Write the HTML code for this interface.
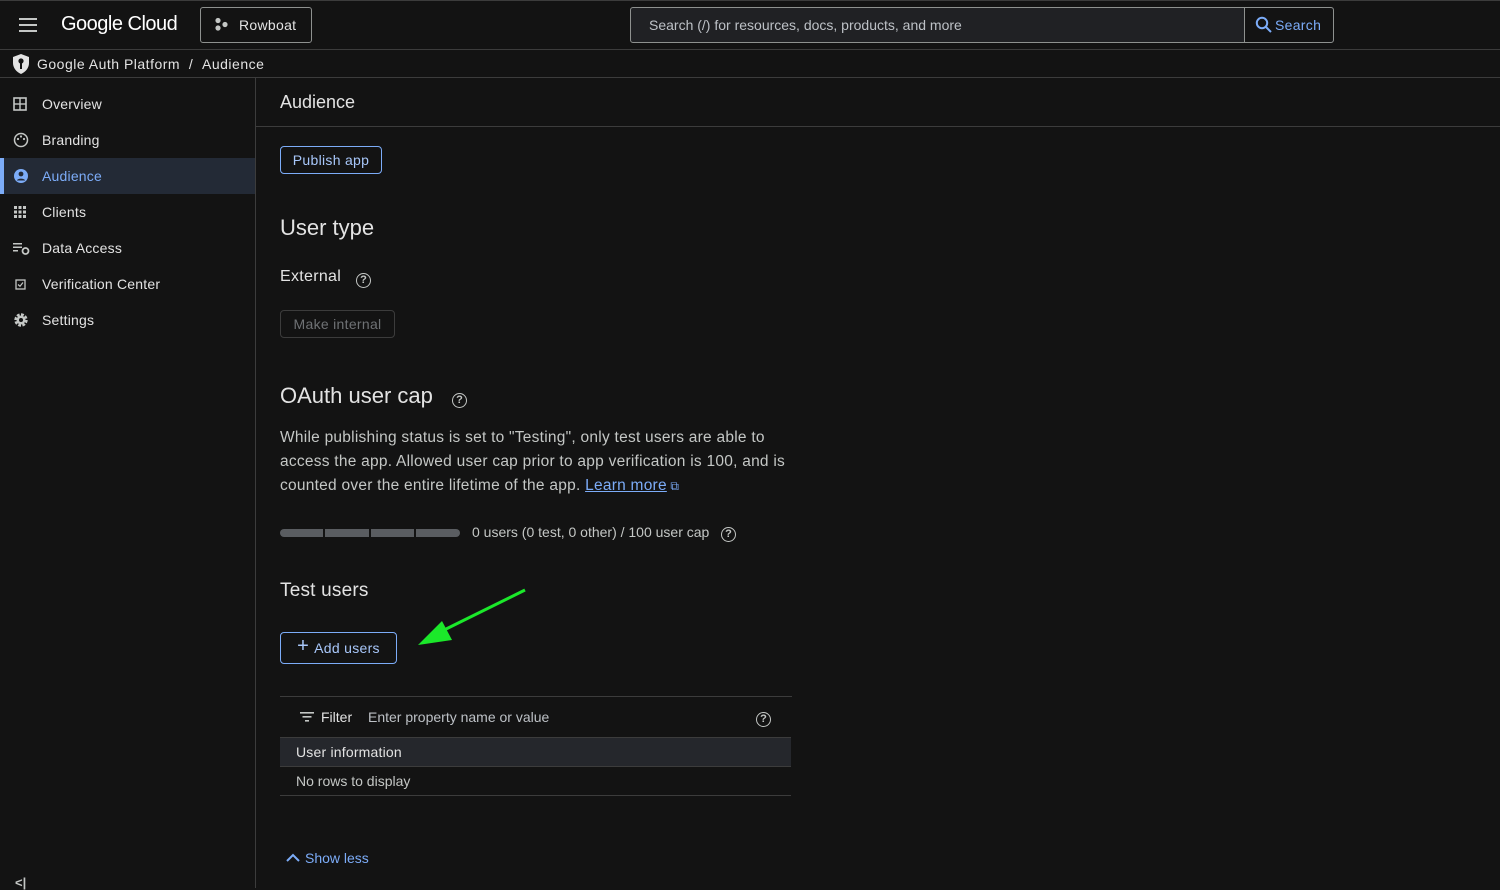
<!DOCTYPE html>
<html><head><meta charset="utf-8"><style>
*{box-sizing:border-box;margin:0;padding:0}
body{width:1500px;height:888px;background:#131313;color:#e3e3e3;font-family:"Liberation Sans",sans-serif;position:relative;overflow:hidden;font-size:14px}
.abs{position:absolute}
.top{left:0;top:0;width:1500px;height:50px;border-top:1px solid #3c3c3c;border-bottom:1px solid #3c3c3c}
.bc{left:0;top:50px;width:1500px;height:28px;border-bottom:1px solid #3c3c3c}
.side{left:0;top:78px;width:256px;height:810px;border-right:1px solid #3c3c3c}
.nav{position:absolute;left:0;width:255px;height:36px;display:flex;align-items:center;font-size:14px;color:#e3e3e3;letter-spacing:.2px}
.nav svg{position:absolute;left:13px}
.nav span{position:absolute;left:42px}
.btn{position:absolute;border:1px solid #7cacf8;border-radius:4px;color:#a8c7fa;font-size:14px;display:flex;align-items:center;justify-content:center;letter-spacing:.3px}
.q{display:inline-block;width:15px;height:15px;border:1.5px solid #c4c7c5;border-radius:50%;font-size:11px;line-height:12px;text-align:center;color:#c4c7c5;font-weight:bold}
</style></head><body>
<div class="abs top"></div>
<svg class="abs" style="left:19px;top:18px" width="18" height="14"><rect y="0" width="18" height="2" fill="#c4c7c5"/><rect y="6" width="18" height="2" fill="#c4c7c5"/><rect y="12" width="18" height="2" fill="#c4c7c5"/></svg>
<div class="abs" style="left:61px;top:13px;font-size:20px;color:#fff;letter-spacing:-.5px">Google Cloud</div>
<div class="abs" style="left:200px;top:7px;width:112px;height:36px;border:1px solid #8e918f;border-radius:3px"></div>
<svg class="abs" style="left:214px;top:17px" width="16" height="16"><circle cx="4" cy="3.5" r="2.6" fill="#c4c7c5"/><circle cx="4" cy="11" r="2.6" fill="#c4c7c5"/><circle cx="11" cy="7.5" r="2.6" fill="#c4c7c5"/></svg>
<div class="abs" style="left:239px;top:17px;font-size:14px;color:#e3e3e3;letter-spacing:.3px">Rowboat</div>
<div class="abs" style="left:630px;top:7px;width:704px;height:36px;border:1px solid #8e918f;border-radius:3px;background:#202124"></div>
<div class="abs" style="left:1244px;top:8px;width:89px;height:34px;background:#131313;border-left:1px solid #8e918f;border-radius:0 3px 3px 0"></div>
<div class="abs" style="left:649px;top:17px;font-size:14px;color:#bdc1c6">Search (/) for resources, docs, products, and more</div>
<svg class="abs" style="left:1255px;top:16px" width="18" height="18"><circle cx="7" cy="7" r="5.2" fill="none" stroke="#7cacf8" stroke-width="2"/><line x1="11" y1="11" x2="16" y2="16" stroke="#7cacf8" stroke-width="2"/></svg>
<div class="abs" style="left:1275px;top:17px;font-size:14px;color:#7cacf8;letter-spacing:.3px">Search</div>

<div class="abs bc"></div>
<svg class="abs" style="left:11px;top:53px" width="20" height="22" viewBox="0 0 20 22"><path d="M10 1 L18 4 V10 C18 15 14.5 19 10 21 C5.5 19 2 15 2 10 V4 Z" fill="#e3e3e3"/><circle cx="10" cy="8" r="2.6" fill="#131313"/><rect x="9" y="10" width="2" height="6" fill="#131313"/></svg>
<div class="abs" style="left:37px;top:56px;font-size:14px;color:#e3e3e3;letter-spacing:.5px">Google Auth Platform&nbsp;&nbsp;/&nbsp;&nbsp;Audience</div>

<div class="abs side">
<div class="nav" style="top:8px"><svg width="14" height="14"><rect x="1" y="1" width="12" height="12" fill="none" stroke="#c4c7c5" stroke-width="1.6"/><line x1="7" y1="1" x2="7" y2="13" stroke="#c4c7c5" stroke-width="1.4"/><line x1="1" y1="7" x2="13" y2="7" stroke="#c4c7c5" stroke-width="1.4"/></svg><span>Overview</span></div>
<div class="nav" style="top:44px"><svg width="16" height="16"><circle cx="8" cy="8" r="6.5" fill="none" stroke="#c4c7c5" stroke-width="1.5"/><circle cx="5" cy="7" r="1.1" fill="#c4c7c5"/><circle cx="8" cy="4.5" r="1.1" fill="#c4c7c5"/><circle cx="11" cy="7" r="1.1" fill="#c4c7c5"/></svg><span>Branding</span></div>
<div class="nav" style="top:80px;background:#232a36"><div style="position:absolute;left:0;top:0;width:4px;height:36px;background:#7cacf8"></div><svg width="16" height="16"><circle cx="8" cy="8" r="7" fill="#7cacf8"/><circle cx="8" cy="6" r="2.4" fill="#232a36"/><path d="M3.8 12.5 C5 10 11 10 12.2 12.5" fill="#232a36"/></svg><span style="color:#7cacf8">Audience</span></div>
<div class="nav" style="top:116px"><svg width="14" height="14" fill="#c4c7c5"><rect x="1" y="1" width="3" height="3"/><rect x="5.5" y="1" width="3" height="3"/><rect x="10" y="1" width="3" height="3"/><rect x="1" y="5.5" width="3" height="3"/><rect x="5.5" y="5.5" width="3" height="3"/><rect x="10" y="5.5" width="3" height="3"/><rect x="1" y="10" width="3" height="3"/><rect x="5.5" y="10" width="3" height="3"/><rect x="10" y="10" width="3" height="3"/></svg><span>Clients</span></div>
<div class="nav" style="top:152px"><svg width="17" height="14" fill="#c4c7c5"><rect x="0" y="2" width="9" height="1.5"/><rect x="0" y="5.5" width="9" height="1.5"/><rect x="0" y="9" width="5" height="1.5"/><circle cx="12.5" cy="10" r="3" fill="none" stroke="#c4c7c5" stroke-width="1.8"/></svg><span>Data Access</span></div>
<div class="nav" style="top:188px"><svg width="14" height="14"><rect x="3" y="3" width="9" height="9" fill="none" stroke="#c4c7c5" stroke-width="1.3"/><path d="M5 7.5 L7 9.3 L10 5.5" fill="none" stroke="#c4c7c5" stroke-width="1.2"/></svg><span>Verification Center</span></div>
<div class="nav" style="top:224px"><svg width="16" height="16"><circle cx="8" cy="8" r="5" fill="none" stroke="#c4c7c5" stroke-width="3.4" stroke-dasharray="2.6 1.3"/><circle cx="8" cy="8" r="4.5" fill="#c4c7c5"/><circle cx="8" cy="8" r="2" fill="#131313"/></svg><span>Settings</span></div>
<div style="position:absolute;left:15px;top:797px;font-size:13px;color:#c4c7c5;font-weight:bold">&lt;|</div>
</div>

<div class="abs" style="left:256px;top:78px;width:1244px;height:49px;border-bottom:1px solid #3c3c3c;background:#131313"></div>
<div class="abs" style="left:280px;top:92px;font-size:18px;color:#e3e3e3">Audience</div>

<div class="btn" style="left:280px;top:146px;width:102px;height:28px">Publish app</div>
<div class="abs" style="left:280px;top:215px;font-size:22px;color:#e3e3e3">User type</div>
<div class="abs" style="left:280px;top:268px;font-size:16px;color:#e3e3e3;letter-spacing:.3px">External</div>
<div class="abs" style="left:356px;top:270px"><span class="q">?</span></div>
<div class="abs" style="left:280px;top:310px;width:115px;height:28px;border:1px solid #3c3c3c;border-radius:4px;color:#6f7275;font-size:14px;text-align:center;line-height:26px;letter-spacing:.3px">Make internal</div>
<div class="abs" style="left:280px;top:383px;font-size:22px;color:#e3e3e3">OAuth user cap</div>
<div class="abs" style="left:452px;top:390px"><span class="q">?</span></div>
<div class="abs" style="left:280px;top:426px;width:510px;font-size:15.5px;line-height:24px;color:#c4c7c5;letter-spacing:.25px">While publishing status is set to "Testing", only test users are able to access the app. Allowed user cap prior to app verification is 100, and is counted over the entire lifetime of the app. <span style="color:#7cacf8;text-decoration:underline">Learn more</span><span style="color:#7cacf8;font-size:12px"> ⧉</span></div>
<div class="abs" style="left:280px;top:529px;width:180px;height:8px;border-radius:4px;background:#5a5d61"></div>
<div class="abs" style="left:323px;top:529px;width:2px;height:8px;background:#131313"></div>
<div class="abs" style="left:369px;top:529px;width:2px;height:8px;background:#131313"></div>
<div class="abs" style="left:414px;top:529px;width:2px;height:8px;background:#131313"></div>
<div class="abs" style="left:472px;top:524px;font-size:14px;color:#c4c7c5">0 users (0 test, 0 other) / 100 user cap</div>
<div class="abs" style="left:721px;top:524px"><span class="q">?</span></div>
<div class="abs" style="left:280px;top:580px;font-size:19px;color:#e3e3e3;letter-spacing:.2px">Test users</div>
<svg class="abs" style="left:410px;top:585px" width="120" height="65"><line x1="115" y1="5" x2="28" y2="48" stroke="#1be82a" stroke-width="3"/><polygon points="8,60 32,36 42,55" fill="#1be82a"/></svg>
<div class="btn" style="left:280px;top:632px;width:117px;height:32px"><span style="font-size:20px;margin-right:5px;margin-top:-3px">+</span>Add users</div>
<div class="abs" style="left:280px;top:696px;width:512px;height:1px;background:#3c3c3c"></div>
<svg class="abs" style="left:300px;top:711px" width="16" height="12" fill="#c4c7c5"><rect x="0" y="1" width="14" height="1.6"/><rect x="2.5" y="5" width="9" height="1.6"/><rect x="5" y="9" width="4" height="1.6"/></svg>
<div class="abs" style="left:321px;top:709px;font-size:14px;color:#e3e3e3">Filter</div>
<div class="abs" style="left:368px;top:709px;font-size:14px;color:#bdc1c6">Enter property name or value</div>
<div class="abs" style="left:756px;top:709px"><span class="q">?</span></div>
<div class="abs" style="left:280px;top:737px;width:511px;height:30px;background:#25272c;border-top:1px solid #3c3c3c;border-bottom:1px solid #3c3c3c"></div>
<div class="abs" style="left:296px;top:744px;font-size:14px;color:#e3e3e3;letter-spacing:.2px">User information</div>
<div class="abs" style="left:296px;top:773px;font-size:14px;color:#c4c7c5">No rows to display</div>
<div class="abs" style="left:280px;top:795px;width:511px;height:1px;background:#3c3c3c"></div>
<svg class="abs" style="left:286px;top:853px" width="14" height="10"><path d="M1 8 L7 2 L13 8" fill="none" stroke="#7cacf8" stroke-width="2"/></svg>
<div class="abs" style="left:305px;top:850px;font-size:14px;color:#7cacf8">Show less</div>
</body></html>
